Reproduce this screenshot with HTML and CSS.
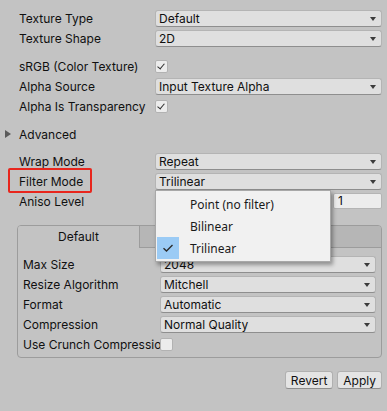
FILE: index.html
```html
<!DOCTYPE html>
<html lang="en">
<head>
  <meta charset="UTF-8" />
  <title>Texture Import Settings</title>
  <link rel="stylesheet" href="styles.css">
</head>
<body>

  <div class="inspector">
    <div class="row first">
      <div class="label">Texture Type</div>
      <div class="dropdown">Default</div>
    </div>
    <div class="row">
      <div class="label">Texture Shape</div>
      <div class="dropdown">2D</div>
    </div>

    <div class="row gap">
      <div class="label">sRGB (Color Texture)</div>
      <div class="check checked"></div>
    </div>
    <div class="row">
      <div class="label">Alpha Source</div>
      <div class="dropdown">Input Texture Alpha</div>
    </div>
    <div class="row">
      <div class="label">Alpha Is Transparency</div>
      <div class="check checked"></div>
    </div>

    <div class="row gap foldout">
      <span class="fold-arrow"></span>Advanced
    </div>

    <div class="row wrap">
      <div class="label">Wrap Mode</div>
      <div class="dropdown">Repeat</div>
    </div>
    <div class="row">
      <div class="label">Filter Mode</div>
      <div class="dropdown">Trilinear</div>
    </div>
    <div class="row">
      <div class="label">Aniso Level</div>
      <div class="slider">
        <div class="track"></div>
        <div class="int-field">1</div>
      </div>
    </div>

    <div class="panel">
      <div class="tabs">
        <div class="tab active">Default</div>
        <div class="tab"></div>
      </div>
      <div class="panel-body">
        <div class="row">
          <div class="label">Max Size</div>
          <div class="dropdown">2048</div>
        </div>
        <div class="row">
          <div class="label">Resize Algorithm</div>
          <div class="dropdown">Mitchell</div>
        </div>
        <div class="row">
          <div class="label">Format</div>
          <div class="dropdown">Automatic</div>
        </div>
        <div class="row">
          <div class="label">Compression</div>
          <div class="dropdown">Normal Quality</div>
        </div>
        <div class="row">
          <div class="label">Use Crunch Compression</div>
          <div class="check"></div>
        </div>
      </div>
    </div>

    <div class="actions">
      <button class="btn">Revert</button>
      <button class="btn">Apply</button>
    </div>

    <!-- highlight drawn over the Filter Mode label -->
    <div class="highlight"></div>

    <!-- open Filter Mode menu -->
    <div class="menu">
      <div class="menu-item"><span class="mark"></span>Point (no filter)</div>
      <div class="menu-item"><span class="mark"></span>Bilinear</div>
      <div class="menu-item"><span class="mark on">
        <svg width="12" height="10" viewBox="0 0 12 10"><path d="M1.5 5.2 L4.5 8 L10.5 2" fill="none" stroke="#2b2b2b" stroke-width="1.4"/></svg>
      </span>Trilinear</div>
    </div>
  </div>

</body>
</html>
```

FILE: styles.css
```css
* {
  box-sizing: border-box;
  margin: 0;
  padding: 0;
}
body {
  background: #c3c3c3;
  font-family: Inter, 'Noto Sans', sans-serif;
  font-size: 12px;
  color: #101010;
}
.inspector {
  position: relative;
  width: 387px;
  height: 411px;
  padding: 8px 5px 0 19px;
}
.row {
  display: flex;
  align-items: center;
  height: 20px;
}
.row.gap {
  margin-top: 8px;
}
.row.wrap {
  margin-top: 7px;
}
.label {
  width: 136px;
  flex: none;
  white-space: nowrap;
  overflow: hidden;
}
.dropdown {
  position: relative;
  flex: 1;
  height: 17px;
  line-height: 15px;
  padding-left: 3px;
  background: #dfdfdf;
  border: 1px solid #b4b4b4;
  border-bottom-color: #8e8e8e;
  border-radius: 3px;
}
.dropdown::after {
  content: "";
  position: absolute;
  right: 5px;
  top: 6px;
  border-left: 3.5px solid transparent;
  border-right: 3.5px solid transparent;
  border-top: 4px solid #3c3c3c;
}
.check {
  width: 13px;
  height: 13px;
  background: #ececec;
  border: 1px solid #b2b2b2;
  border-radius: 2px;
  position: relative;
}
.check.checked::after {
  content: "";
  position: absolute;
  left: 3px;
  top: 1px;
  width: 3px;
  height: 6px;
  border-right: 1.3px solid #303030;
  border-bottom: 1.3px solid #303030;
  transform: rotate(40deg);
}
.foldout {
  margin-left: -14px;
}
.fold-arrow {
  width: 0;
  height: 0;
  margin-right: 8px;
  border-top: 4px solid transparent;
  border-bottom: 4px solid transparent;
  border-left: 6px solid #5a5a5a;
}
.slider {
  flex: 1;
  display: flex;
  align-items: center;
  gap: 5px;
}
.track {
  flex: 1;
  height: 2px;
  background: #8a8a8a;
}
.int-field {
  width: 49px;
  height: 16px;
  line-height: 14px;
  padding-left: 4px;
  background: #ececec;
  border: 1px solid #b4b4b4;
  border-radius: 2px;
}
.panel {
  margin: 14px 0 0 -2px;
  border: 1px solid #9c9c9c;
  border-radius: 4px;
  overflow: hidden;
}
.tabs {
  display: flex;
  height: 22px;
}
.tab {
  flex: 1;
  background: #b6b6b6;
  border-bottom: 1px solid #9c9c9c;
}
.tab.active {
  flex: none;
  width: 122px;
  text-align: center;
  line-height: 22px;
  background: #c3c3c3;
  border-bottom: none;
  border-right: 1px solid #9c9c9c;
}
.panel-body {
  padding: 6px 5px 3px 5px;
}
.panel-body .label {
  width: 137px;
}
.actions {
  display: flex;
  justify-content: flex-end;
  gap: 4px;
  margin-top: 13px;
}
.btn {
  height: 18px;
  padding: 0 5px;
  font-family: inherit;
  font-size: 12px;
  color: #101010;
  background: #e4e4e4;
  border: 1px solid #b0b0b0;
  border-bottom-color: #8e8e8e;
  border-radius: 3px;
}
.highlight {
  position: absolute;
  left: 8px;
  top: 168px;
  width: 84px;
  height: 25px;
  border: 2px solid #e8261d;
  border-radius: 2px;
}
.menu {
  position: absolute;
  left: 155px;
  top: 190px;
  width: 176px;
  padding: 2px 1px;
  background: #f1f1f1;
  border: 1px solid #a8a8a8;
  box-shadow: 2px 3px 4px rgba(0, 0, 0, 0.35);
  font-family: 'Noto Sans', sans-serif;
  font-size: 12px;
  color: #1a1a1a;
}
.menu-item {
  display: flex;
  align-items: center;
  height: 22px;
}
.mark {
  width: 22px;
  height: 22px;
  margin-right: 11px;
  display: flex;
  align-items: center;
  justify-content: center;
}
.mark.on {
  background: #9bcbf5;
}
```
